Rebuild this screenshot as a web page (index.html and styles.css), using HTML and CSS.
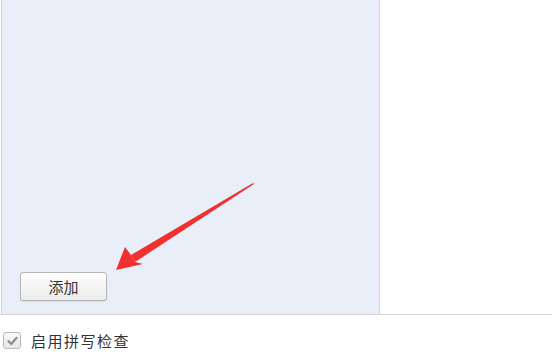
FILE: index.html
```html
<!DOCTYPE html>
<html lang="zh">
<head>
<meta charset="utf-8">
<link rel="stylesheet" href="styles.css">
</head>
<body>
<div class="page">
  <div class="top">
    <div class="panel">
      <button class="btn">添加</button>
    </div>
    <div class="rest"></div>
  </div>
  <label class="check-row">
    <span class="checkbox">
      <svg width="11" height="10" viewBox="0 0 11 10"><path d="M1.5 5.2 L4.3 8 L9.6 1.8" fill="none" stroke="#8a8a8a" stroke-width="2.2" stroke-linecap="round" stroke-linejoin="round"/></svg>
    </span>
    <span class="check-text">启用拼写检查</span>
  </label>
  <svg class="arrow" width="552" height="364" viewBox="0 0 552 364">
    <path d="M254 184 L253 183 L131 255 L135 262 Z" fill="#f0312f"/>
    <path d="M116 270 L125 247 L131 255 L135 262 L143 264 Z" fill="#f0312f"/>
  </svg>
</div>
</body>
</html>
```

FILE: styles.css
```css
html, body {
  margin: 0;
  padding: 0;
  background: #ffffff;
}
.page {
  position: relative;
  width: 552px;
  height: 364px;
  overflow: hidden;
  font-family: "Noto Sans CJK SC", "Liberation Sans", sans-serif;
}
.top {
  display: flex;
  height: 314px;
  border-bottom: 1px solid #d6d6d6;
}
.panel {
  margin-left: 1px;
  width: 359px;
  border-left: 1px solid #d2d2d2;
  border-right: 1px solid #d2d2d2;
  background: #eaeef9;
  display: flex;
  flex-direction: column;
  justify-content: flex-end;
  align-items: flex-start;
  padding: 0 0 13px 18px;
}
.btn {
  width: 87px;
  height: 29px;
  border: 1px solid #b4b4b4;
  border-radius: 3px;
  background: linear-gradient(#ffffff, #ececec);
  font-family: "Noto Sans CJK SC", sans-serif;
  font-size: 15px;
  color: #333333;
  padding: 0;
  box-shadow: 0 1px 1px rgba(0,0,0,0.08);
}
.rest {
  flex: 1;
}
.check-row {
  display: flex;
  align-items: center;
  gap: 10px;
  padding: 15px 0 0 3px;
}
.checkbox {
  width: 16px;
  height: 15px;
  border: 1px solid #b8b8b8;
  border-radius: 3px;
  background: linear-gradient(#fafafa, #e6e6e6);
  display: flex;
  align-items: center;
  justify-content: center;
}
.check-text {
  font-size: 15px;
  color: #333333;
  letter-spacing: 1.5px;
}
.arrow {
  position: absolute;
  left: 0;
  top: 0;
  pointer-events: none;
}
```
